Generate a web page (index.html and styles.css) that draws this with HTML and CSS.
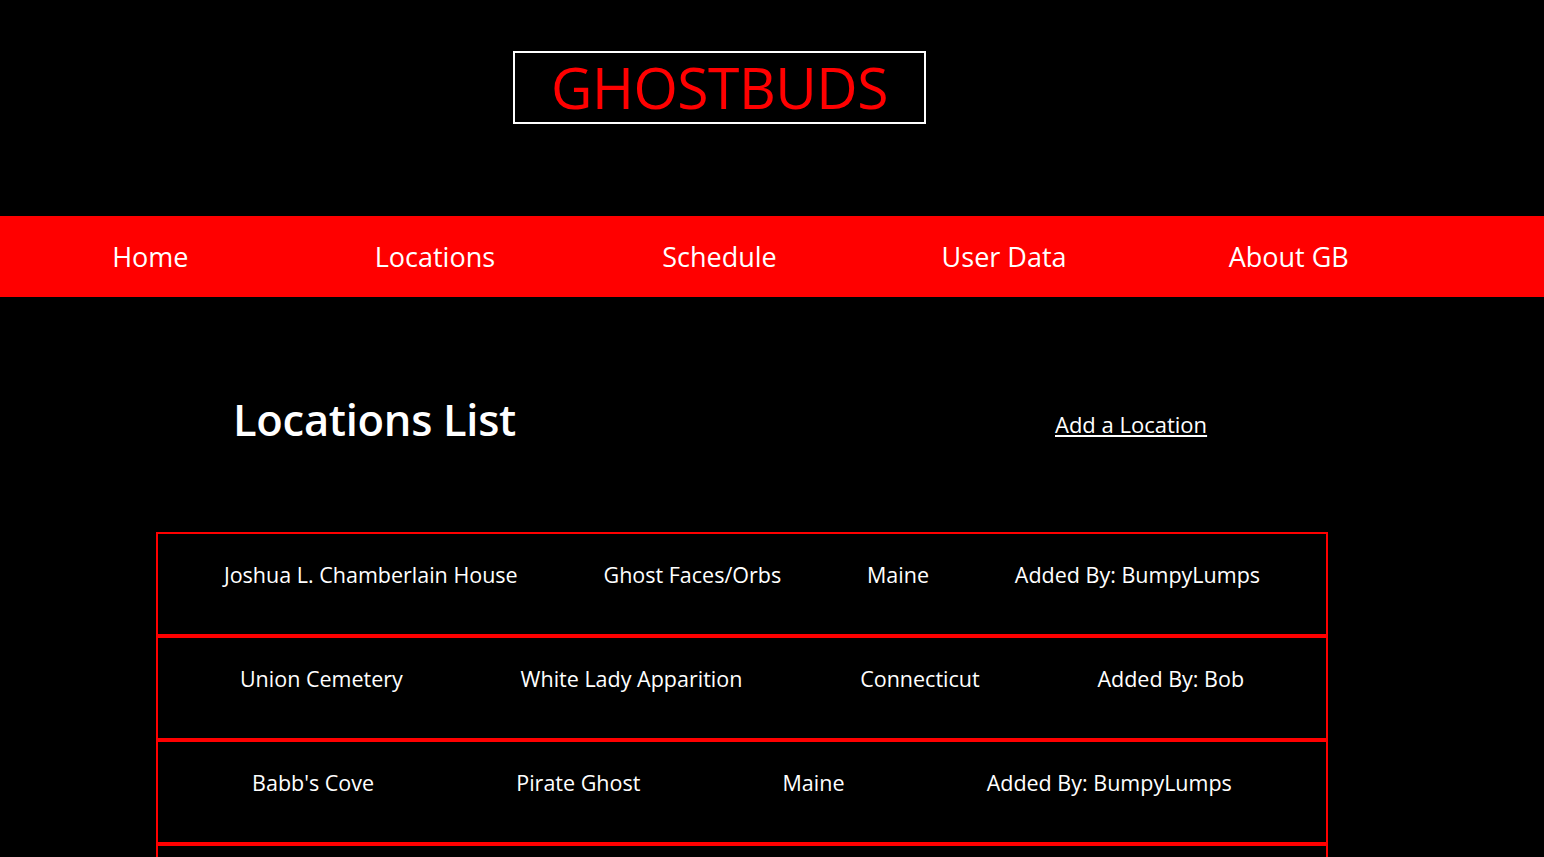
FILE: index.html
```html
<!DOCTYPE html>
<html>
<head>
<meta charset="utf-8">
<title>Ghostbuds - Locations</title>
<link rel="stylesheet" href="styles.css">
</head>
<body>
<header class="site-header">
  <div class="inner">
    <h1 class="logo">GHOSTBUDS</h1>
  </div>
</header>
<nav class="main-nav">
  <ul class="inner nav-list">
    <li><a href="#">Home</a></li>
    <li><a href="#">Locations</a></li>
    <li><a href="#">Schedule</a></li>
    <li><a href="#">User Data</a></li>
    <li><a href="#">About GB</a></li>
  </ul>
</nav>
<main class="content">
  <div class="list-head">
    <h2 class="list-title">Locations List</h2>
    <a class="add-link" href="#">Add a Location</a>
  </div>
  <div class="locations">
    <div class="loc-row">
      <span>Joshua L. Chamberlain House</span>
      <span>Ghost Faces/Orbs</span>
      <span>Maine</span>
      <span>Added By: BumpyLumps</span>
    </div>
    <div class="loc-row">
      <span>Union Cemetery</span>
      <span>White Lady Apparition</span>
      <span>Connecticut</span>
      <span>Added By: Bob</span>
    </div>
    <div class="loc-row">
      <span>Babb's Cove</span>
      <span>Pirate Ghost</span>
      <span>Maine</span>
      <span>Added By: BumpyLumps</span>
    </div>
    <div class="loc-row">
      <span>Sea Dog Brewing</span>
      <span>Shadow Figure</span>
      <span>Maine</span>
      <span>Added By: Bob</span>
    </div>
  </div>
</main>
</body>
</html>
```
FILE: styles.css
```css
html, body {
  margin: 0;
  padding: 0;
  background: #000;
  color: #fff;
  font-family: "Open Sans", "Noto Sans", sans-serif;
}

.inner {
  margin-left: 8px;
  width: 1423px;
}

.site-header {
  height: 216px;
}

.site-header .inner {
  display: flex;
  justify-content: center;
  padding-top: 51px;
}

.logo {
  margin: 0;
  box-sizing: border-box;
  width: 413px;
  height: 73px;
  border: 2px solid #fff;
  color: #ff0000;
  font-weight: 400;
  font-size: 57px;
  line-height: 69px;
  text-align: center;
  letter-spacing: -0.5px;
}

.main-nav {
  background: #ff0000;
  height: 81px;
}

.nav-list {
  list-style: none;
  padding: 0;
  margin-top: 0;
  margin-bottom: 0;
  display: grid;
  grid-template-columns: repeat(5, 1fr);
  height: 81px;
  align-items: center;
}

.nav-list li {
  text-align: center;
}

.nav-list a {
  color: #fff;
  text-decoration: none;
  font-size: 27px;
}

.content {
  padding-top: 92px;
}

.list-head {
  display: flex;
  align-items: center;
  height: 60px;
  padding-left: 233px;
}

.list-title {
  margin: 0;
  font-size: 43.5px;
  font-weight: 600;
  width: 822px;
  letter-spacing: -0.3px;
}

.add-link {
  color: #fff;
  font-size: 22px;
  margin-top: 10px;
}

.locations {
  margin-top: 83px;
  margin-left: 156px;
  width: 1172px;
}

.loc-row {
  box-sizing: border-box;
  height: 104px;
  border: 2px solid #ff0000;
  display: flex;
  justify-content: space-around;
  padding: 26px 23px 0;
  font-size: 21.5px;
}
```
